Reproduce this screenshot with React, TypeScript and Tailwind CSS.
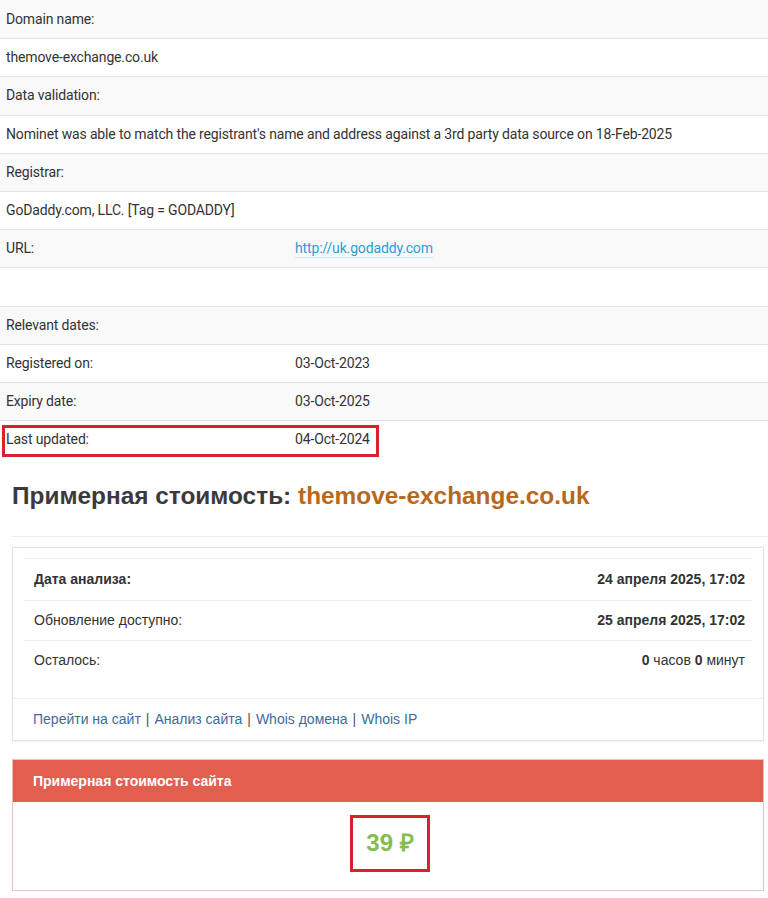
const whoisRows: { label: string; value?: string; link?: boolean; blank?: boolean }[] = [
  { label: 'Domain name:' },
  { label: 'themove-exchange.co.uk' },
  { label: 'Data validation:' },
  { label: "Nominet was able to match the registrant's name and address against a 3rd party data source on 18-Feb-2025" },
  { label: 'Registrar:' },
  { label: 'GoDaddy.com, LLC. [Tag = GODADDY]' },
  { label: 'URL:', value: 'http://uk.godaddy.com', link: true },
  { label: '', blank: true },
  { label: 'Relevant dates:' },
  { label: 'Registered on:', value: '03-Oct-2023' },
  { label: 'Expiry date:', value: '03-Oct-2025' },
  { label: 'Last updated:', value: '04-Oct-2024' },
]

function WhoisTable() {
  return (
    <div className="relative font-['Roboto',sans-serif] text-[14px] text-[#333] tracking-[-0.15px]">
      {whoisRows.map((row, i) => (
        <div
          key={i}
          className={`grid h-[38.2px] grid-cols-[289px_1fr] items-center px-[6px] ${i > 0 ? 'border-t border-[#e3e3e3]' : ''} ${
            i % 2 === 0 && !row.blank ? 'bg-[#f9f9f9]' : 'bg-white'
          }`}
        >
          <div className={row.value ? '' : 'col-span-2 whitespace-nowrap'}>{row.label}</div>
          {row.value && (
            <div>
              {row.link ? (
                <a className="border-b border-[#cfe6f3] pb-[1px] text-[#2a9fd6]" href="#">
                  {row.value}
                </a>
              ) : (
                row.value
              )}
            </div>
          )}
        </div>
      ))}
      {/* highlight around last row */}
      <div className="absolute left-[2px] top-[425px] h-[32px] w-[377px] border-[3px] border-[#d8232f]" />
    </div>
  )
}

function InfoPanel() {
  return (
    <div className="ml-[12px] mr-[4px] mt-[10px] border border-[#e3e3e3] bg-white p-[10px] shadow-[0_1px_2px_rgba(0,0,0,0.06)]">
      <div className="border-t border-[#efefef]">
        <div className="flex h-[41px] items-center justify-between pl-[11px] pr-[8px] font-bold">
          <span>Дата анализа:</span>
          <span>24 апреля 2025, 17:02</span>
        </div>
        <div className="flex h-[40px] items-center justify-between border-t border-[#efefef] pl-[11px] pr-[8px]">
          <span>Обновление доступно:</span>
          <span className="font-bold">25 апреля 2025, 17:02</span>
        </div>
        <div className="flex h-[40px] items-center justify-between border-t border-[#efefef] pl-[11px] pr-[8px]">
          <span>Осталось:</span>
          <span>
            <b>0</b> часов <b>0</b> минут
          </span>
        </div>
      </div>
      <div className="-mx-[10px] -mb-[10px] mt-[18px] flex h-[42px] items-center border-t border-[#efefef] px-[20px] text-[#3d6b9e]">
        <a href="#">Перейти на сайт</a>
        <span className="mx-[5px] text-[#555]">|</span>
        <a href="#">Анализ сайта</a>
        <span className="mx-[5px] text-[#555]">|</span>
        <a href="#">Whois домена</a>
        <span className="mx-[5px] text-[#555]">|</span>
        <a href="#">Whois IP</a>
      </div>
    </div>
  )
}

function PricePanel() {
  return (
    <div className="ml-[12px] mr-[4px] mt-[18px] border border-[#e6c4bf]">
      <div className="flex h-[42px] items-center bg-[#e25e4e] px-[20px] font-bold text-white">Примерная стоимость сайта</div>
      <div className="flex h-[88px] justify-center bg-white pt-[13px]">
        <div className="ml-[4px] h-[57px] border-[3px] border-[#d8232f] px-[13px] pt-[9px] text-[24px] font-bold leading-[32px] text-[#86bd4f]">
          39 ₽
        </div>
      </div>
    </div>
  )
}

export default function App() {
  return (
    <div className="min-h-[898px] w-[768px] bg-white">
      <WhoisTable />
      <div className="font-['Liberation_Sans',Arial,sans-serif] text-[14px] text-[#333]">
        <h2 className="mt-[22px] px-[12px] text-[24.4px] font-bold leading-[32px] text-[#3a3a3a]">
          Примерная стоимость: <span className="text-[#b8681b]">themove-exchange.co.uk</span>
        </h2>
        <div className="ml-[12px] mt-[24px] border-t border-[#eeeeee]" />
        <InfoPanel />
        <PricePanel />
      </div>
    </div>
  )
}
